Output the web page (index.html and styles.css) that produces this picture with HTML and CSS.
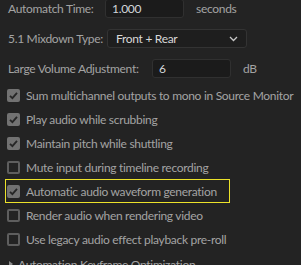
FILE: index.html
```html
<!DOCTYPE html>
<html lang="en">
<head>
    <meta charset="UTF-8">
    <title>Audio Preferences</title>
    <link rel="stylesheet" href="styles.css">
</head>
<body>
    <div class="panel">
        <div class="form-row first">
            <span class="label label-time">Automatch Time:</span>
            <div class="text-input input-time">1.000</div>
            <span class="unit unit-time">seconds</span>
        </div>
        <div class="form-row">
            <span class="label label-mix">5.1 Mixdown Type:</span>
            <div class="dropdown">
                <span>Front + Rear</span>
                <svg class="chevron" width="9" height="6" viewBox="0 0 9 6"><path d="M1 1 L4.5 4.5 L8 1" fill="none" stroke="#c8c8c8" stroke-width="1.3"/></svg>
            </div>
        </div>
        <div class="form-row">
            <span class="label label-vol">Large Volume Adjustment:</span>
            <div class="text-input input-vol">6</div>
            <span class="unit unit-db">dB</span>
        </div>

        <div class="check-list">
            <div class="check-row">
                <span class="box checked"><svg width="13" height="13" viewBox="0 0 13 13"><path d="M3 6.8 L5.4 9.2 L10 3.8" fill="none" stroke="#262626" stroke-width="1.8"/></svg></span>
                <span class="check-text">Sum multichannel outputs to mono in Source Monitor</span>
            </div>
            <div class="check-row">
                <span class="box checked"><svg width="13" height="13" viewBox="0 0 13 13"><path d="M3 6.8 L5.4 9.2 L10 3.8" fill="none" stroke="#262626" stroke-width="1.8"/></svg></span>
                <span class="check-text">Play audio while scrubbing</span>
            </div>
            <div class="check-row">
                <span class="box checked"><svg width="13" height="13" viewBox="0 0 13 13"><path d="M3 6.8 L5.4 9.2 L10 3.8" fill="none" stroke="#262626" stroke-width="1.8"/></svg></span>
                <span class="check-text">Maintain pitch while shuttling</span>
            </div>
            <div class="check-row">
                <span class="box"></span>
                <span class="check-text">Mute input during timeline recording</span>
            </div>
            <div class="check-row highlight">
                <span class="box checked"><svg width="13" height="13" viewBox="0 0 13 13"><path d="M3 6.8 L5.4 9.2 L10 3.8" fill="none" stroke="#262626" stroke-width="1.8"/></svg></span>
                <span class="check-text">Automatic audio waveform generation</span>
            </div>
            <div class="check-row">
                <span class="box"></span>
                <span class="check-text">Render audio when rendering video</span>
            </div>
            <div class="check-row">
                <span class="box"></span>
                <span class="check-text">Use legacy audio effect playback pre-roll</span>
            </div>
        </div>

        <div class="section-head">
            <svg class="caret" width="6" height="8" viewBox="0 0 6 8"><path d="M1 1 L5 4 L1 7 Z" fill="#8a8a8a"/></svg>
            <span>Automation Keyframe Optimization</span>
        </div>
    </div>
</body>
</html>
```

FILE: styles.css
```css
body {
    margin: 0;
    background-color: #232323;
    font-family: Lato, "Noto Sans", sans-serif;
    font-size: 12px;
    letter-spacing: -0.3px;
    color: #a3a3a3;
    white-space: nowrap;
    overflow: hidden;
}

.panel {
    padding-left: 8px;
}

.form-row {
    display: flex;
    align-items: center;
    height: 19px;
    margin-bottom: 11px;
}

.form-row.first {
    margin-top: -1px;
}

.label {
    flex-shrink: 0;
}

.label-time { width: 97px; }
.label-mix { width: 99px; }
.label-vol { width: 144px; }

.text-input {
    box-sizing: border-box;
    height: 19px;
    padding-left: 6px;
    background-color: #1b1b1b;
    border: 1px solid #303030;
    border-radius: 3px;
    color: #d2d6da;
    line-height: 17px;
}

.input-time { width: 79px; }
.input-vol { width: 79px; }

.unit-time { margin-left: 12px; }
.unit-db { margin-left: 12px; }

.dropdown {
    box-sizing: border-box;
    width: 140px;
    height: 19px;
    display: flex;
    align-items: center;
    justify-content: space-between;
    padding: 0 8px 0 8px;
    background-color: #1e1e1e;
    border: 1px solid #333;
    border-radius: 3px;
    color: #d8d8d8;
}

.check-list {
    margin-left: -1px;
    margin-top: -6px;
}

.check-row {
    display: flex;
    align-items: center;
    height: 24px;
}

.box {
    box-sizing: border-box;
    flex-shrink: 0;
    width: 13px;
    height: 13px;
    margin-right: 6px;
    border: 2px solid #5e5e5e;
    border-radius: 2px;
    display: flex;
}

.box.checked {
    border: none;
    background-color: #727272;
}

.highlight {
    box-sizing: border-box;
    width: 225px;
    margin-left: -2px;
    padding-left: 1px;
    border: 1px solid #ece22a;
}

.section-head {
    display: flex;
    align-items: center;
    gap: 4px;
    margin-top: 3px;
    height: 20px;
}
```
